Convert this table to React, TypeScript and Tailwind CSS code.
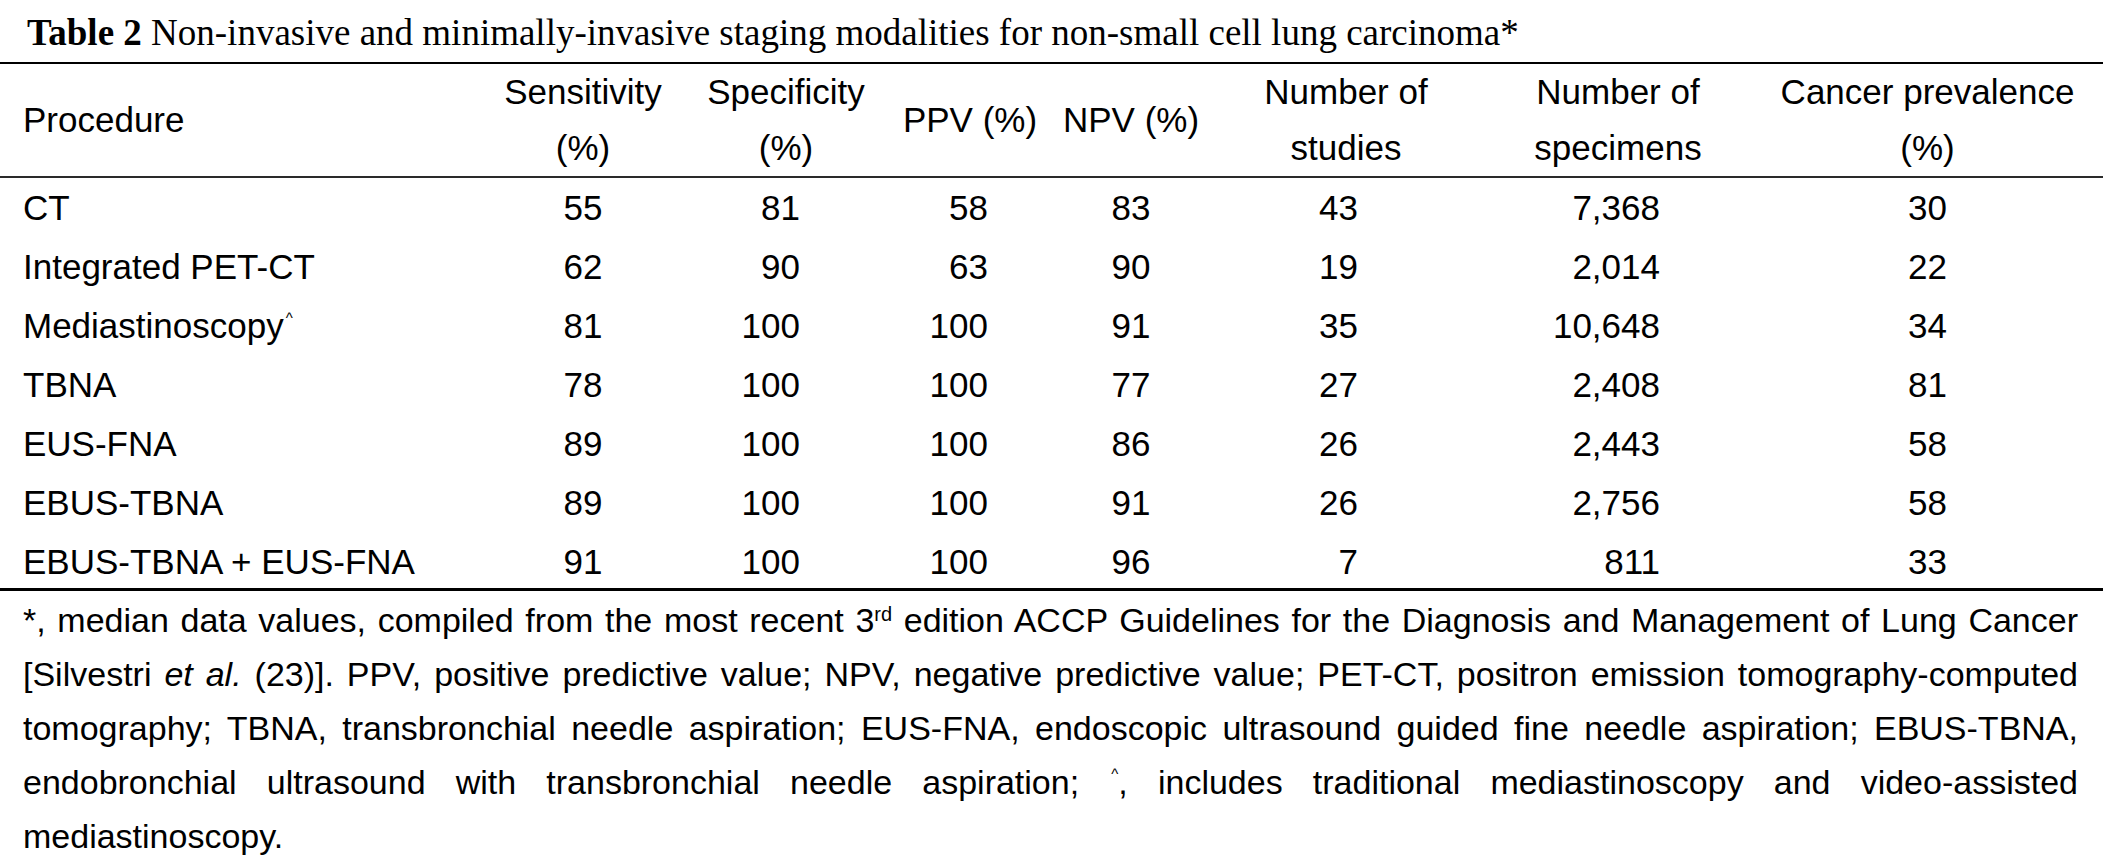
const cols = "grid grid-cols-[480px_206px_200px_168px_154px_276px_268px_351px]";

type Row = {
  name: string;
  caret?: boolean;
  sens: string;
  spec: string;
  ppv: string;
  npv: string;
  studies: string;
  specimens: string;
  prev: string;
};

const rows: Row[] = [
  { name: "CT", sens: "55", spec: "81", ppv: "58", npv: "83", studies: "43", specimens: "7,368", prev: "30" },
  { name: "Integrated PET-CT", sens: "62", spec: "90", ppv: "63", npv: "90", studies: "19", specimens: "2,014", prev: "22" },
  { name: "Mediastinoscopy", caret: true, sens: "81", spec: "100", ppv: "100", npv: "91", studies: "35", specimens: "10,648", prev: "34" },
  { name: "TBNA", sens: "78", spec: "100", ppv: "100", npv: "77", studies: "27", specimens: "2,408", prev: "81" },
  { name: "EUS-FNA", sens: "89", spec: "100", ppv: "100", npv: "86", studies: "26", specimens: "2,443", prev: "58" },
  { name: "EBUS-TBNA", sens: "89", spec: "100", ppv: "100", npv: "91", studies: "26", specimens: "2,756", prev: "58" },
  { name: "EBUS-TBNA + EUS-FNA", sens: "91", spec: "100", ppv: "100", npv: "96", studies: "7", specimens: "811", prev: "33" },
];

function Caret() {
  return <span className="relative -top-[15px] ml-[2px] text-[15px] leading-none">^</span>;
}

export default function App() {
  return (
    <div className="w-[2103px] bg-white text-black">
      {/* caption */}
      <div className="h-[62px] pl-[27px] pt-[12px] font-['Liberation_Serif',serif] text-[37px] leading-[42px] whitespace-nowrap">
        <b>Table 2</b> Non-invasive and minimally-invasive staging modalities for non-small cell lung carcinoma*
      </div>

      <div className="font-['Liberation_Sans',Arial,sans-serif] text-[35px]">
        {/* header */}
        <div className={`${cols} border-t-2 border-b-2 border-t-black border-b-[#2a2a2a] h-[116px] leading-[56px]`}>
          <div className="flex items-center pl-[23px]">Procedure</div>
          <div className="flex items-center justify-center text-center">Sensitivity<br />(%)</div>
          <div className="flex items-center justify-center text-center">Specificity<br />(%)</div>
          <div className="flex items-center justify-center">PPV (%)</div>
          <div className="flex items-center justify-center">NPV (%)</div>
          <div className="flex items-center justify-center text-center">Number of<br />studies</div>
          <div className="flex items-center justify-center text-center">Number of<br />specimens</div>
          <div className="flex items-center justify-center text-center">Cancer prevalence<br />(%)</div>
        </div>

        {/* body */}
        {rows.map((r, i) => (
          <div
            key={r.name}
            className={`${cols} leading-[59px] h-[59px] ${i === rows.length - 1 ? "border-b-[3px] border-black" : ""}`}
          >
            <div className="pl-[23px] whitespace-nowrap">
              {r.name}
              {r.caret && <Caret />}
            </div>
            <div className="text-center">{r.sens}</div>
            <div className="text-right pr-[86px]">{r.spec}</div>
            <div className="text-right pr-[66px]">{r.ppv}</div>
            <div className="text-center">{r.npv}</div>
            <div className="text-right pr-[126px]">{r.studies}</div>
            <div className="text-right pr-[92px]">{r.specimens}</div>
            <div className="text-center">{r.prev}</div>
          </div>
        ))}
      </div>

      {/* footnote */}
      <div className="pl-[23px] pr-[25px] pt-[2px] font-['Liberation_Sans',Arial,sans-serif] text-[34px] leading-[54px]">
        <div className="text-justify [text-align-last:justify]">
          *, median data values, compiled from the most recent 3
          <span className="relative -top-[11px] text-[20px] leading-none">rd</span> edition ACCP Guidelines for the
          Diagnosis and Management of Lung Cancer
        </div>
        <div className="text-justify [text-align-last:justify]">
          [Silvestri <i>et al.</i> (23)]. PPV, positive predictive value; NPV, negative predictive value; PET-CT,
          positron emission tomography-computed
        </div>
        <div className="text-justify [text-align-last:justify]">
          tomography; TBNA, transbronchial needle aspiration; EUS-FNA, endoscopic ultrasound guided fine needle
          aspiration; EBUS-TBNA,
        </div>
        <div className="text-justify [text-align-last:justify]">
          endobronchial ultrasound with transbronchial needle aspiration; <Caret />, includes traditional
          mediastinoscopy and video-assisted
        </div>
        <div>mediastinoscopy.</div>
      </div>
    </div>
  );
}
